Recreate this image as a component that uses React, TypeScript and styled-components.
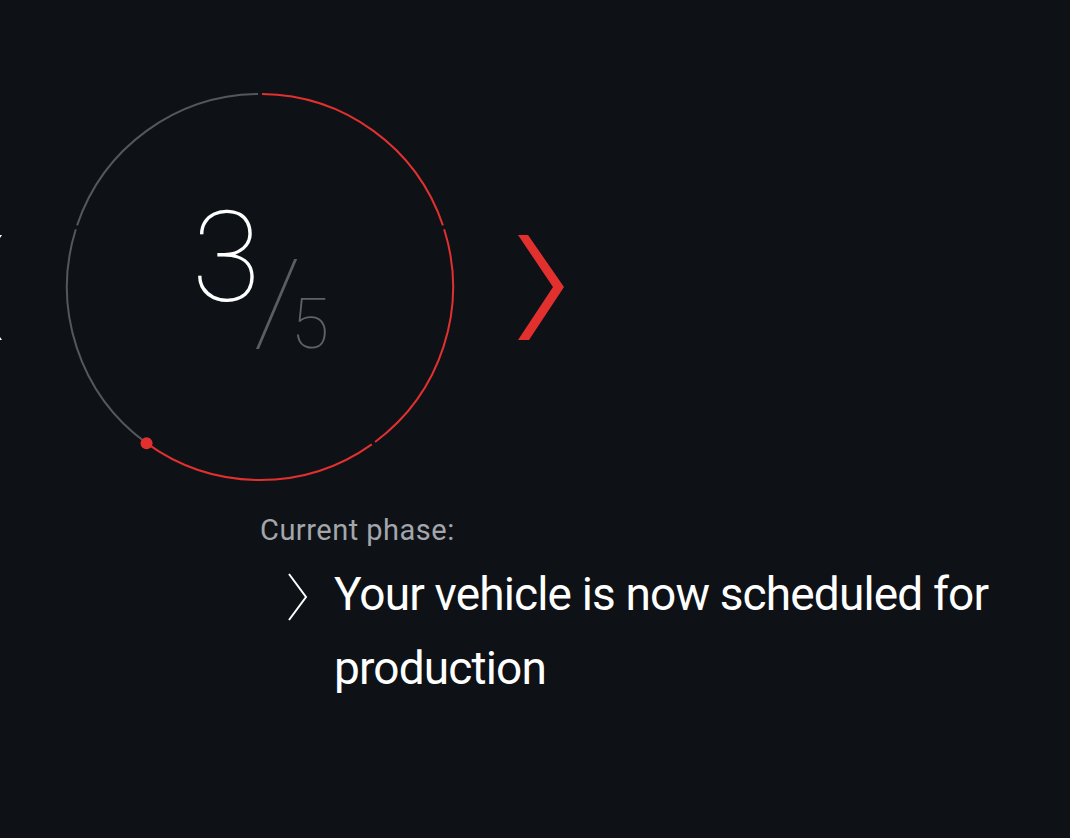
import React from "react";
import styled, { createGlobalStyle } from "styled-components";

const Global = createGlobalStyle`
  html, body { margin: 0; padding: 0; background: #0e1217; }
  body { font-family: Roboto, "Noto Sans", sans-serif; color: #fff; overflow: hidden; }
`;

const Page = styled.main`
  width: 1070px;
  height: 838px;
  background: #0e1217;
  padding-top: 92px;
  box-sizing: border-box;
  overflow: hidden;
`;

const Stepper = styled.div`
  display: flex;
  align-items: center;
  gap: 63px;
  margin-left: -45px;
`;

const NavButton = styled.button`
  width: 47px;
  height: 105px;
  padding: 0;
  border: 0;
  background: none;
  display: flex;
  align-items: center;
  justify-content: center;
  cursor: pointer;
  svg { display: block; }
`;

const Dial = styled.div`
  display: grid;
  width: 390px;
  height: 390px;
  & > * { grid-area: 1 / 1; }
`;

const Fraction = styled.div`
  display: flex;
  align-items: flex-start;
  justify-content: center;
  padding-top: 103px;
  padding-left: 1px;
`;

const Num = styled.span`
  font-family: Roboto, sans-serif;
  font-weight: 100;
  font-size: 126px;
  line-height: 1;
  color: #fff;
`;

const Slash = styled.span`
  display: block;
  width: 3px;
  height: 90px;
  background: #5a5d61;
  margin-top: 64px;
  margin-left: -5px;
  transform: skewX(-23deg);
  transform-origin: bottom left;
`;

const Den = styled.span`
  font-family: Roboto, sans-serif;
  font-weight: 100;
  font-size: 70px;
  line-height: 1;
  color: #5f6266;
  margin-top: 94px;
  margin-left: 32px;
`;

const Phase = styled.section`
  margin-left: 260px;
  margin-top: 30px;
  display: flex;
  flex-direction: column;
`;

const PhaseLabel = styled.div`
  font-size: 29px;
  line-height: 36px;
  color: #a3a6ab;
  letter-spacing: 0.5px;
`;

const PhaseRow = styled.div`
  display: flex;
  align-items: flex-start;
  gap: 26px;
  margin-top: 20px;
  margin-left: 28px;
  svg { flex: none; margin-top: 5px; }
`;

const PhaseText = styled.p`
  margin: 0;
  max-width: 700px;
  font-size: 46px;
  line-height: 74px;
  margin-top: -11px;
  color: #fff;
  letter-spacing: -0.85px;
`;

const CX = 195;
const CY = 195;
const R = 193;

function pt(deg: number) {
  const a = (deg * Math.PI) / 180;
  return [CX + R * Math.sin(a), CY - R * Math.cos(a)];
}

function arc(a1: number, a2: number) {
  const [x1, y1] = pt(a1);
  const [x2, y2] = pt(a2);
  const large = a2 - a1 > 180 ? 1 : 0;
  return `M${x1.toFixed(2)} ${y1.toFixed(2)} A${R} ${R} 0 ${large} 1 ${x2.toFixed(2)} ${y2.toFixed(2)}`;
}

const RED = "#e2302f";
const GREY = "#54575b";

function Ring({ current, total }: { current: number; total: number }) {
  const step = 360 / total;
  const gap = 0.6;
  const segs = Array.from({ length: total }, (_, i) => {
    const start = i * step + (i === current ? 0 : gap);
    const end = (i + 1) * step - (i + 1 === current ? 0 : gap);
    return (
      <path
        key={i}
        d={arc(start, end)}
        fill="none"
        stroke={i < current ? RED : GREY}
        strokeWidth={2}
      />
    );
  });
  const [dx, dy] = pt(current * step);
  return (
    <svg width={390} height={390} viewBox="0 0 390 390">
      {segs}
      <circle cx={dx} cy={dy} r={6} fill={RED} />
    </svg>
  );
}

function Chevron({ dir, color }: { dir: "left" | "right"; color: string }) {
  return (
    <svg width={47} height={105} viewBox="0 0 47 105">
      <g transform={dir === "left" ? "translate(47 0) scale(-1 1)" : undefined}>
        <polygon points="0,0 10,0 46,52 11,105 0,105 35,52" fill={color} />
      </g>
    </svg>
  );
}

function SmallChevron() {
  return (
    <svg width={20} height={48} viewBox="0 0 20 48">
      <polyline points="1,1 18,24 1,47" fill="none" stroke="#fff" strokeWidth={2} />
    </svg>
  );
}

export default function App() {
  return (
    <>
      <Global />
      <Page>
        <Stepper>
          <NavButton aria-label="Previous">
            <Chevron dir="left" color="#ffffff" />
          </NavButton>
          <Dial>
            <Ring current={3} total={5} />
            <Fraction>
              <Num>3</Num>
              <Slash />
              <Den>5</Den>
            </Fraction>
          </Dial>
          <NavButton aria-label="Next">
            <Chevron dir="right" color={RED} />
          </NavButton>
        </Stepper>
        <Phase>
          <PhaseLabel>Current phase:</PhaseLabel>
          <PhaseRow>
            <SmallChevron />
            <PhaseText>Your vehicle is now scheduled for production</PhaseText>
          </PhaseRow>
        </Phase>
      </Page>
    </>
  );
}
